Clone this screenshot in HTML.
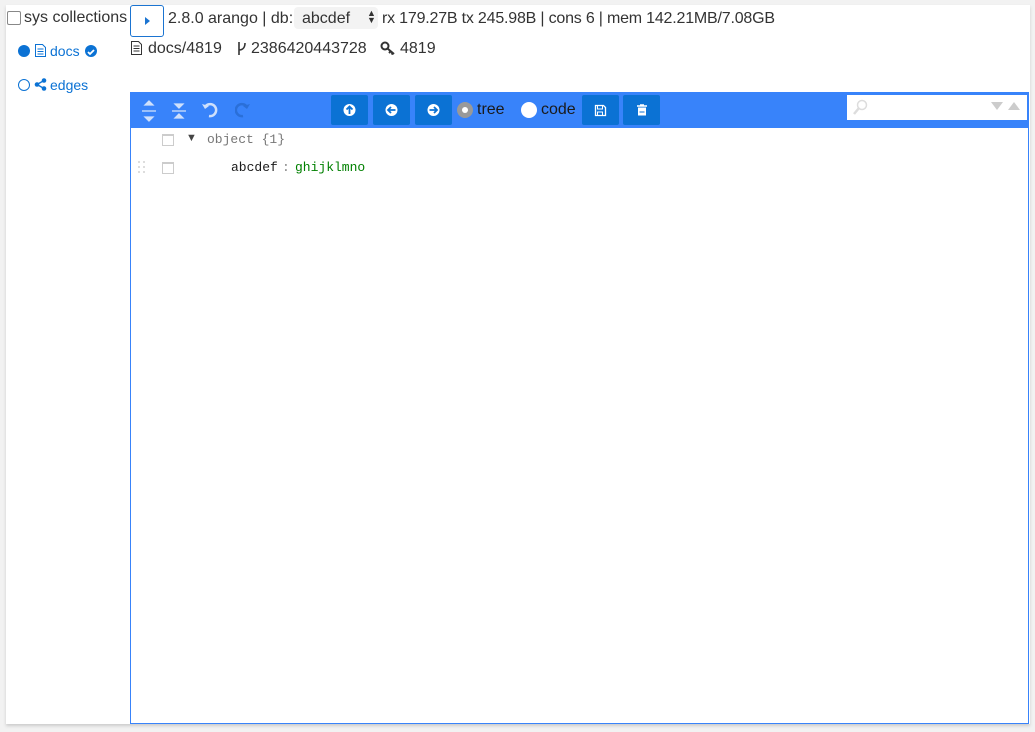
<!DOCTYPE html>
<html><head><style>
body{margin:0;width:1035px;height:732px;background:#f2f2f2;font-family:"Liberation Sans",sans-serif;position:relative;overflow:hidden}
.panel{position:absolute;left:6px;top:5px;width:1024px;height:719px;background:#fff;box-shadow:0 2px 3px #ccc}
.abs{position:absolute}
.t{font-size:16px;color:#333;white-space:nowrap}
.blue{color:#0b72d4}
.ed{position:absolute;left:130px;top:92px;width:897px;height:630px;border:1px solid #3883fa}
.menu{position:absolute;left:0;top:0;width:897px;height:35px;background:#3883fa}
.btn{position:absolute;top:2px;width:37px;height:30px;background:#0b72d4;border-radius:2px}
.mono{font-family:"Liberation Mono",monospace;font-size:13px}
.cb{position:absolute;width:10px;height:10px;border:1px solid #ccc}
</style></head><body>
<div class="panel"></div>
<div class="abs" style="left:7px;top:11px;width:12px;height:12px;border:1px solid #888;border-radius:2px;background:#fff"></div>
<div class="abs t" style="left:24px;top:9px">sys collections</div>
<div class="abs" style="left:130px;top:5px;width:32px;height:30px;border:1px solid #1b74d1;border-radius:3px;background:#fff"><svg width="32" height="30"><path d="M14 11 L19 15 L14 19Z" fill="#1b74d1"/></svg></div>
<div class="abs t" style="left:168px;top:10px">2.8.0 arango | db:</div>
<div class="abs" style="left:294px;top:7px;width:84px;height:22px;background:#f3f3f3;border-radius:4px"></div>
<div class="abs t" style="left:302px;top:10px">abcdef</div>
<div class="abs" style="left:367px;top:10px;font-size:9px;line-height:7px;color:#333">▲<br>▼</div>
<div class="abs t" style="left:382px;top:10px;letter-spacing:-0.2px">rx 179.27B tx 245.98B | cons 6 | mem 142.21MB/7.08GB</div>
<div class="abs" style="left:18px;top:45px;width:12px;height:12px;border-radius:50%;background:#0b72d4"></div>
<svg class="abs" style="left:34px;top:43px" width="13" height="15"><path d="M1.5 1.5h7l3 3v9h-10z M3.5 6h6M3.5 8.5h6M3.5 11h6" stroke="#0b72d4" fill="none"/></svg>
<div class="abs blue" style="left:50px;top:43px;font-size:14px">docs</div>
<div class="abs" style="left:85px;top:45px;width:12px;height:12px;border-radius:50%;background:#0b72d4"><svg width="12" height="12"><path d="M3 6l2 2 4-4" stroke="#fff" stroke-width="1.8" fill="none"/></svg></div>
<div class="abs" style="left:18px;top:79px;width:10px;height:10px;border-radius:50%;border:1px solid #0b72d4"></div>
<svg class="abs" style="left:34px;top:78px" width="13" height="13"><circle cx="3" cy="6.5" r="2.3" fill="#0b72d4"/><circle cx="10" cy="2.5" r="2.3" fill="#0b72d4"/><circle cx="10" cy="10.5" r="2.3" fill="#0b72d4"/><path d="M3 6.5L10 2.5M3 6.5L10 10.5" stroke="#0b72d4" stroke-width="1.3"/></svg>
<div class="abs blue" style="left:50px;top:77px;font-size:14px">edges</div>
<svg class="abs" style="left:130px;top:40px" width="14" height="16"><path d="M1.5 1.5h7l3 3v10h-10z M3.5 6h6M3.5 8.5h6M3.5 11h6" stroke="#333" fill="none"/></svg>
<div class="abs t" style="left:148px;top:40px">docs/4819</div>
<svg class="abs" style="left:236px;top:41px" width="12" height="15"><path d="M3 1v13M3 9c4 0 6-3 6-7" stroke="#333" stroke-width="1.6" fill="none"/></svg>
<div class="abs t" style="left:251px;top:40px">2386420443728</div>
<svg class="abs" style="left:380px;top:41px" width="16" height="14"><circle cx="5" cy="5" r="3.5" stroke="#333" stroke-width="2" fill="none"/><path d="M7.5 7.5L14 13M11 10l-2 2M13 12l-1.5 1.5" stroke="#333" stroke-width="2"/></svg>
<div class="abs t" style="left:400px;top:40px">4819</div>
<div class="ed">
<div class="menu">
<svg class="abs" style="left:8px;top:6px" width="80" height="24"><g stroke="#cfe0fb" stroke-width="1.3" fill="#cfe0fb"><path d="M3 12h14"/><path d="M10 2l-4 4h8z M10 22l-4-4h8z"/><path d="M33 12h14"/><path d="M40 9l-4-4h8z M40 15l-4 4h8z"/></g><path d="M70 17a6 6 0 1 0-4-9" stroke="#cfe0fb" stroke-width="2.5" fill="none"/><path d="M63 5l3 5 4-3z" fill="#cfe0fb"/></svg>
<svg class="abs" style="left:104px;top:6px" width="24" height="24"><path d="M8 17a6 6 0 1 1 4-9" stroke="#2a6fd8" stroke-width="2.5" fill="none"/><path d="M15 5l-3 5-4-3z" fill="#2a6fd8"/></svg>
<div class="btn" style="left:200px"><svg width="37" height="30"><circle cx="18.5" cy="15" r="6" fill="#fff"/><path d="M18.5 19v-7M15.5 14.5l3-3 3 3" stroke="#0b72d4" stroke-width="1.8" fill="none"/></svg></div>
<div class="btn" style="left:242px"><svg width="37" height="30"><circle cx="18.5" cy="15" r="6" fill="#fff"/><path d="M22.5 15h-7M18 12l-3 3 3 3" stroke="#0b72d4" stroke-width="1.8" fill="none"/></svg></div>
<div class="btn" style="left:284px"><svg width="37" height="30"><circle cx="18.5" cy="15" r="6" fill="#fff"/><path d="M14.5 15h7M19 12l3 3-3 3" stroke="#0b72d4" stroke-width="1.8" fill="none"/></svg></div>
<div class="abs" style="left:326px;top:9px;width:16px;height:16px;border-radius:50%;background:#999"><div style="margin:5px;width:6px;height:6px;border-radius:50%;background:#fff"></div></div>
<div class="abs t" style="left:346px;top:8px;color:#1a1a1a">tree</div>
<div class="abs" style="left:390px;top:9px;width:16px;height:16px;border-radius:50%;background:#fff"></div>
<div class="abs t" style="left:410px;top:8px;color:#1a1a1a">code</div>
<div class="btn" style="left:451px"><svg width="37" height="30"><path d="M13.5 10.5h8l2 2v8h-10z" stroke="#fff" stroke-width="1.3" fill="none"/><path d="M15.5 11v3h5v-3M15.5 20v-3h5v3" stroke="#fff" fill="none"/></svg></div>
<div class="btn" style="left:492px"><svg width="37" height="30"><path d="M14 11h10M17 10h4" stroke="#fff" stroke-width="1.4"/><path d="M15 12.5h8v8h-8z" fill="#fff"/><path d="M16.5 17h5" stroke="#0b72d4"/></svg></div>
<div class="abs" style="left:716px;top:2px;width:180px;height:25px;background:#fff"><svg width="180" height="25"><circle cx="15" cy="10" r="4.5" stroke="#ddd" stroke-width="1.5" fill="none"/><path d="M12 13l-5 6" stroke="#ddd" stroke-width="2.5"/><path d="M144 7h12l-6 8z" fill="#ccc"/><path d="M161 15h12l-6-8z" fill="#ccc"/></svg></div>
</div>
<div class="cb" style="left:31px;top:41px"></div><div class="abs" style="left:32px;top:42px;width:10px;height:1px;background:#ccc"></div>
<div class="abs" style="left:55px;top:39px;font-size:11px;color:#444">▼</div>
<div class="abs mono" style="left:76px;top:39px;color:#777">object {1}</div>
<svg class="abs" style="left:6px;top:67px" width="10" height="14"><g fill="#ddd"><rect x="1" y="1" width="2" height="2"/><rect x="6" y="1" width="2" height="2"/><rect x="1" y="6" width="2" height="2"/><rect x="6" y="6" width="2" height="2"/><rect x="1" y="11" width="2" height="2"/><rect x="6" y="11" width="2" height="2"/></g></svg>
<div class="cb" style="left:31px;top:69px"></div><div class="abs" style="left:32px;top:70px;width:10px;height:1px;background:#ccc"></div>
<div class="abs mono" style="left:100px;top:67px;color:#1a1a1a">abcdef</div>
<div class="abs mono" style="left:151px;top:67px;color:#888">:</div>
<div class="abs mono" style="left:164px;top:67px;color:#008000">ghijklmno</div>
</div>
</body></html>
